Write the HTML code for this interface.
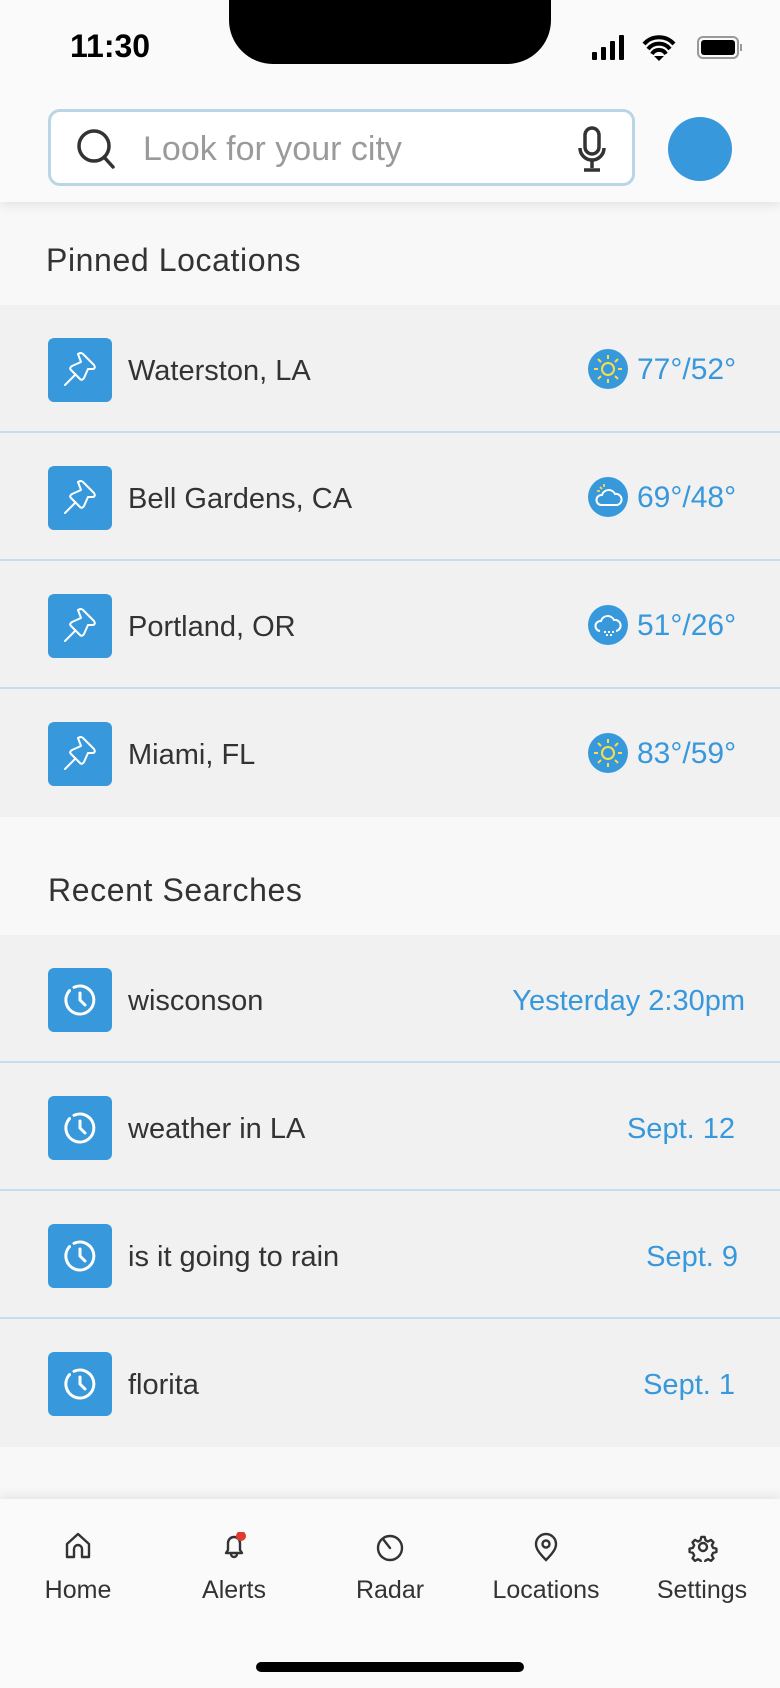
<!DOCTYPE html>
<html><head><meta charset="utf-8"><style>
*{margin:0;padding:0;box-sizing:border-box}
body{width:780px;height:1688px;background:#f8f8f8;font-family:"Liberation Sans",sans-serif;position:relative;overflow:hidden;color:#333}
.abs{position:absolute}
.header{left:0;top:0;width:780px;height:202px;background:#fafafa;box-shadow:0 4px 10px rgba(0,0,0,0.08);z-index:2}
.notch{left:229px;top:-2px;width:322px;height:66px;background:#000;border-radius:0 0 44px 44px}
.time{left:70px;top:28px;font-size:32px;font-weight:bold;color:#000}
.search{left:48px;top:109px;width:587px;height:77px;border:3px solid #b9d5e8;border-radius:12px;background:#fff}
.ph{left:92px;top:18px;font-size:34px;color:#9a9a9a}
.avatar{left:668px;top:117px;width:64px;height:64px;border-radius:50%;background:#3898dc}
.h2{font-size:32px;color:#333;letter-spacing:0.6px}
.row{left:0;width:780px;height:128px;background:#f1f1f1;border-bottom:2px solid #c2def2}
.row.last{border-bottom:none}
.sq{left:48px;top:33px;width:64px;height:64px;background:#3898dc;border-radius:6px}
.name{left:128px;top:50px;font-size:29px;color:#333}
.wi{left:588px;top:44px;width:40px;height:40px;border-radius:50%;background:#3898dc}
.temp{left:637px;top:48px;font-size:30px;color:#3898dc}
.date{right:35px;top:50px;font-size:29px;color:#3898dc}
.nav{left:0;top:1499px;width:780px;height:189px;background:#fafafa;box-shadow:0 -4px 10px rgba(0,0,0,0.08)}
.ni{width:156px;text-align:center;top:0}
.ni svg{position:absolute;left:64px;top:33px}
.ni span{position:absolute;left:0;width:156px;top:77px;font-size:25px;color:#333}
.bar{left:256px;top:1662px;width:268px;height:10px;border-radius:5px;background:#000}
</style></head><body>
<div class="abs header">
  <div class="abs notch"></div>
  <div class="abs time">11:30</div>
  <svg class="abs" style="left:590px;top:34px" width="160" height="28" viewBox="0 0 160 28">
    <rect x="2" y="18" width="5" height="8" rx="1" fill="#000"/><rect x="11" y="13" width="5" height="13" rx="1" fill="#000"/><rect x="20" y="7" width="5" height="19" rx="1" fill="#000"/><rect x="29" y="1" width="5" height="25" rx="1" fill="#000"/>
    <path d="M54 10 a20 20 0 0 1 30 0 M58 15 a14 14 0 0 1 22 0 M62 20 a8 8 0 0 1 14 0" stroke="#000" stroke-width="4" fill="none"/><path d="M64 22 L69 27 L74 22 Z" fill="#000"/>
    <rect x="108" y="3" width="40" height="21" rx="5" fill="none" stroke="#999" stroke-width="2"/><rect x="111" y="6" width="34" height="15" rx="3" fill="#000"/><rect x="150" y="10" width="2" height="7" fill="#999"/>
  </svg>
  <div class="abs search">
    <svg class="abs" style="left:26px;top:16px" width="40" height="44" viewBox="0 0 40 44"><circle cx="17" cy="18" r="15" stroke="#333" stroke-width="3.5" fill="none"/><path d="M27 29 L36 39" stroke="#333" stroke-width="3.5" stroke-linecap="round"/></svg>
    <div class="abs ph">Look for your city</div>
    <svg class="abs" style="left:526px;top:14px" width="30" height="48" viewBox="0 0 30 48"><rect x="8" y="2" width="14" height="26" rx="7" fill="none" stroke="#333" stroke-width="3.5"/><path d="M3 22 a12 12 0 0 0 24 0 M15 34 V42 M7 44 H23" stroke="#333" stroke-width="3.5" fill="none"/></svg>
  </div>
  <div class="abs avatar"></div>
</div>

<div class="abs h2" style="left:46px;top:242px">Pinned Locations</div>

<svg width="0" height="0" style="position:absolute"><defs>
<g id="pin"><path d="M30 16 Q33 14 35 16 L46 27 Q48 30 45 31 L40 31 L36 40 Q34 43 32 41 L23 32 Q21 30 24 28 L33 24 Z" fill="none" stroke="#fff" stroke-width="2" stroke-linejoin="round"/><path d="M27 37 L17 47" stroke="#fff" stroke-width="2" stroke-linecap="round"/></g>
<g id="clk"><path d="M21.5 22.6 A14 14 0 1 0 26 19.3" fill="none" stroke="#fff" stroke-width="3" stroke-linecap="round"/><path d="M32 25 V32 L37 37" fill="none" stroke="#fff" stroke-width="3" stroke-linecap="round"/></g>
<g id="sun"><circle cx="20" cy="20" r="6" fill="none" stroke="#f5e04a" stroke-width="2"/><path d="M20 6v4M20 30v4M6 20h4M30 20h4M10 10l3 3M27 27l3 3M10 30l3-3M27 13l3-3" stroke="#f5e04a" stroke-width="2"/></g>
<g id="pc"><path d="M13 28 a5 5 0 0 1 1-10 a7 7 0 0 1 13-1 a5.5 5.5 0 0 1 2 11 Z" fill="none" stroke="#fff" stroke-width="2"/><path d="M12 10l2 2M16 7v3M9 14h3" stroke="#f5e04a" stroke-width="1.8"/></g>
<g id="sn"><path d="M12 26 a5 5 0 0 1 1-10 a7 7 0 0 1 13-1 a5.5 5.5 0 0 1 2 11" fill="none" stroke="#fff" stroke-width="2"/><path d="M16 27h2M20 27h2M24 27h2M18 30h2M22 30h2" stroke="#fff" stroke-width="2"/></g>
</defs></svg>

<div class="abs row" style="top:305px"><div class="abs sq"><svg width="64" height="64"><use href="#pin"/></svg></div><div class="abs name">Waterston, LA</div><div class="abs wi"><svg width="40" height="40"><use href="#sun"/></svg></div><div class="abs temp">77°/52°</div></div>
<div class="abs row" style="top:433px"><div class="abs sq"><svg width="64" height="64"><use href="#pin"/></svg></div><div class="abs name">Bell Gardens, CA</div><div class="abs wi"><svg width="40" height="40"><use href="#pc"/></svg></div><div class="abs temp">69°/48°</div></div>
<div class="abs row" style="top:561px"><div class="abs sq"><svg width="64" height="64"><use href="#pin"/></svg></div><div class="abs name">Portland, OR</div><div class="abs wi"><svg width="40" height="40"><use href="#sn"/></svg></div><div class="abs temp">51°/26°</div></div>
<div class="abs row last" style="top:689px"><div class="abs sq"><svg width="64" height="64"><use href="#pin"/></svg></div><div class="abs name">Miami, FL</div><div class="abs wi"><svg width="40" height="40"><use href="#sun"/></svg></div><div class="abs temp">83°/59°</div></div>

<div class="abs h2" style="left:48px;top:872px">Recent Searches</div>

<div class="abs row" style="top:935px"><div class="abs sq"><svg width="64" height="64"><use href="#clk"/></svg></div><div class="abs name">wisconson</div><div class="abs date">Yesterday 2:30pm</div></div>
<div class="abs row" style="top:1063px"><div class="abs sq"><svg width="64" height="64"><use href="#clk"/></svg></div><div class="abs name">weather in LA</div><div class="abs date" style="right:45px">Sept. 12</div></div>
<div class="abs row" style="top:1191px"><div class="abs sq"><svg width="64" height="64"><use href="#clk"/></svg></div><div class="abs name">is it going to rain</div><div class="abs date" style="right:42px">Sept. 9</div></div>
<div class="abs row last" style="top:1319px"><div class="abs sq"><svg width="64" height="64"><use href="#clk"/></svg></div><div class="abs name">florita</div><div class="abs date" style="right:45px">Sept. 1</div></div>

<div class="abs nav">
  <div class="abs ni" style="left:0"><svg width="28" height="28" viewBox="0 0 28 28"><path d="M3 25 V12 L14 2 L25 12 V25 H18 V17 a4 4 0 0 0 -8 0 V25 Z" fill="none" stroke="#333" stroke-width="2.4" stroke-linejoin="round"/></svg><span>Home</span></div>
  <div class="abs ni" style="left:156px"><svg width="30" height="30" viewBox="0 0 30 30"><path d="M6 21 L8 18 V11 a6 6 0 0 1 12 0 V18 L22 21 Z M11 22 a3 3 0 0 0 6 0" fill="none" stroke="#333" stroke-width="2.4" stroke-linejoin="round"/><circle cx="21" cy="4" r="5" fill="#e03a2e"/></svg><span>Alerts</span></div>
  <div class="abs ni" style="left:312px"><svg width="28" height="30" viewBox="0 0 28 30"><circle cx="14" cy="16" r="12" fill="none" stroke="#333" stroke-width="2.4"/><path d="M7 7 L14 16" stroke="#333" stroke-width="2.4" stroke-linecap="round"/></svg><span>Radar</span></div>
  <div class="abs ni" style="left:468px"><svg width="28" height="30" viewBox="0 0 28 30"><path d="M14 28 C6 20 4 16 4 12 a10 10 0 0 1 20 0 c0 4 -2 8 -10 16 Z" fill="none" stroke="#333" stroke-width="2.4"/><circle cx="14" cy="12" r="3.5" fill="none" stroke="#333" stroke-width="2.4"/></svg><span>Locations</span></div>
  <div class="abs ni" style="left:624px"><svg width="30" height="30" viewBox="0 0 30 30"><path d="M13 3h4l1 4 3 1.5 3.5-2 3 3-2 3.5 1.5 3 4 1v4l-4 1-1.5 3 2 3.5-3 3-3.5-2-3 1.5-1 4h-4l-1-4-3-1.5-3.5 2-3-3 2-3.5-1.5-3-4-1v-4l4-1 1.5-3-2-3.5 3-3 3.5 2 3-1.5z" transform="translate(2.4 2.4) scale(0.84)" fill="none" stroke="#333" stroke-width="2.8" stroke-linejoin="round"/><circle cx="15" cy="15" r="4" fill="none" stroke="#333" stroke-width="2.4"/></svg><span>Settings</span></div>
</div>
<div class="abs bar"></div>
</body></html>
